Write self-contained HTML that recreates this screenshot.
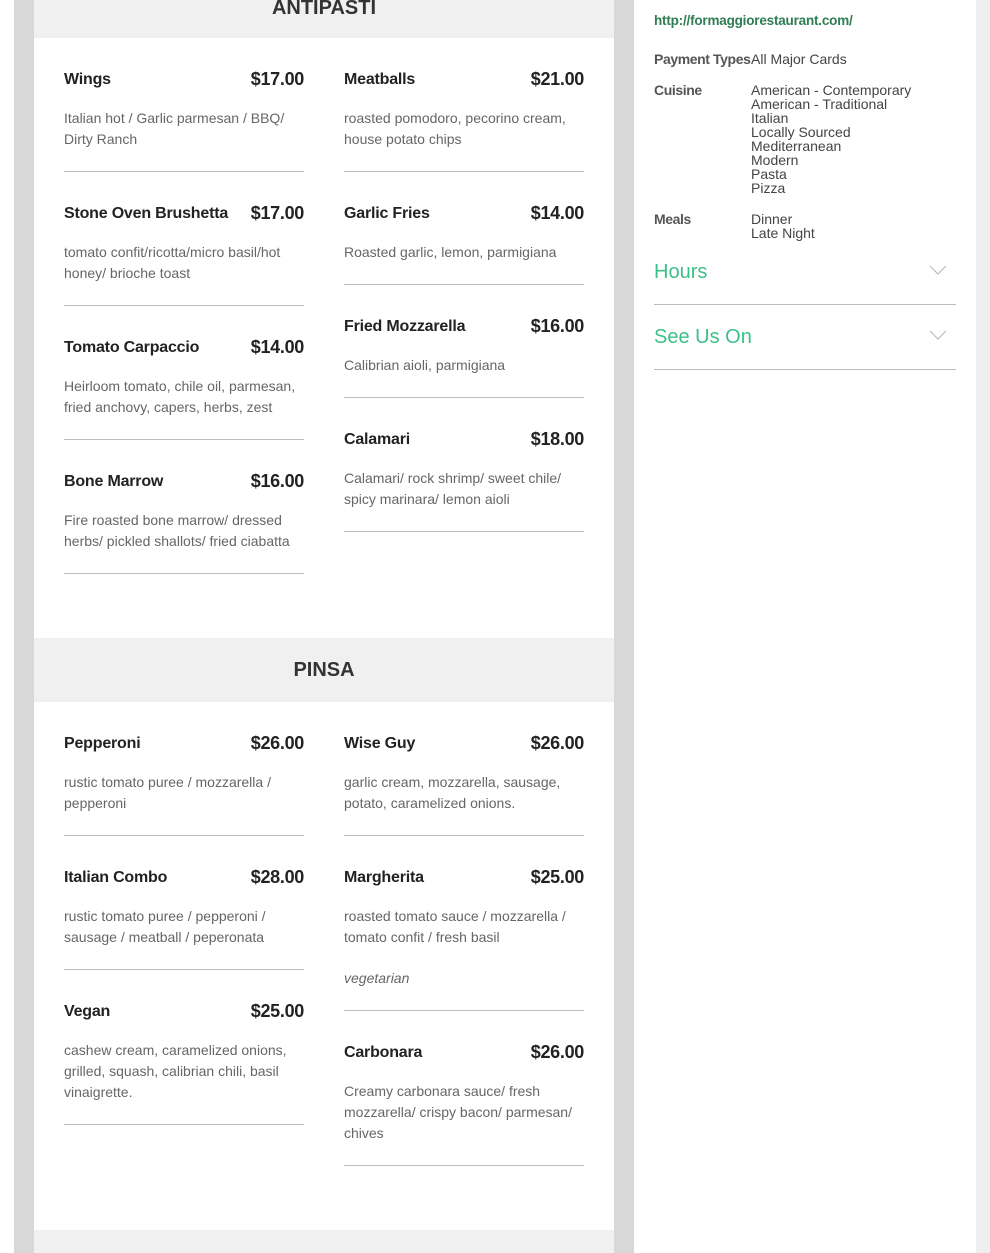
<!DOCTYPE html>
<html style="width:990px;height:1253px;overflow:hidden"><head><meta charset="utf-8"><style>
*{margin:0;padding:0;box-sizing:border-box}
body{width:990px;height:1253px;overflow:hidden;background:#fff;font-family:"Liberation Sans",Arial,sans-serif;position:relative}
.bgl{position:absolute;left:14px;top:0;width:962px;height:1253px;background:#d8d8d8}
.bgr{position:absolute;left:976px;top:0;width:14px;height:1253px;background:#efefef}
.main{position:absolute;left:34px;top:0;width:580px;height:1253px;background:#fff;overflow:hidden}
.side{position:absolute;left:634px;top:0;width:342px;height:1253px;background:#fff}
.band{position:absolute;left:0;width:580px;background:#f0f0f0;text-align:center;font-size:20px;font-weight:bold;color:#333}
.col{position:absolute;width:240px}
.it{border-bottom:1px solid #bdbdbd;margin-bottom:31px}
.t{display:flex;justify-content:space-between;height:20px;line-height:21px;font-size:16px;font-weight:bold;color:#222;letter-spacing:-.2px;white-space:nowrap}
.t b{font-size:18px;letter-spacing:-.3px}
.d{margin-top:19px;font-size:14px;line-height:21px;color:#666;padding-bottom:21px}
.g{font-size:14px;font-style:italic;color:#666;line-height:21px;margin-top:-1px;padding-bottom:21px}
.url{position:absolute;left:20px;top:13px;font-size:13.5px;font-weight:bold;color:#2f7d52;letter-spacing:-.2px}
.row{position:absolute;left:20px;font-size:14px;color:#444;line-height:14px}
.row .k{position:absolute;left:0;font-weight:bold;color:#555;white-space:nowrap;letter-spacing:-.4px}
.row .v{position:absolute;left:97px;white-space:nowrap}
.acc{position:absolute;left:20px;width:302px;height:65px;border-bottom:1px solid #bdbdbd;font-size:20px;color:#3dbf8a}
.acc svg{position:absolute;right:9px;top:25px}
</style></head><body>
<div class="bgl"></div><div class="bgr"></div>
<div class="main">
<div class="band" style="top:-20px;height:58px;line-height:56px">ANTIPASTI</div>
<div class="col" style="left:30px;top:69px">
<div class="it"><div class="t"><span>Wings</span><b>$17.00</b></div><div class="d">Italian hot / Garlic parmesan / BBQ/ Dirty Ranch</div></div>
<div class="it"><div class="t"><span>Stone Oven Brushetta</span><b>$17.00</b></div><div class="d">tomato confit/ricotta/micro basil/hot honey/ brioche toast</div></div>
<div class="it"><div class="t"><span>Tomato Carpaccio</span><b>$14.00</b></div><div class="d">Heirloom tomato, chile oil, parmesan, fried anchovy, capers, herbs, zest</div></div>
<div class="it"><div class="t"><span>Bone Marrow</span><b>$16.00</b></div><div class="d">Fire roasted bone marrow/ dressed herbs/ pickled shallots/ fried ciabatta</div></div>
</div>
<div class="col" style="left:310px;top:69px">
<div class="it"><div class="t"><span>Meatballs</span><b>$21.00</b></div><div class="d">roasted pomodoro, pecorino cream, house potato chips</div></div>
<div class="it"><div class="t"><span>Garlic Fries</span><b>$14.00</b></div><div class="d">Roasted garlic, lemon, parmigiana</div></div>
<div class="it"><div class="t"><span>Fried Mozzarella</span><b>$16.00</b></div><div class="d">Calibrian aioli, parmigiana</div></div>
<div class="it"><div class="t"><span>Calamari</span><b>$18.00</b></div><div class="d">Calamari/ rock shrimp/ sweet chile/ spicy marinara/ lemon aioli</div></div>
</div>
<div class="band" style="top:638px;height:64px;line-height:64px">PINSA</div>
<div class="col" style="left:30px;top:733px">
<div class="it"><div class="t"><span>Pepperoni</span><b>$26.00</b></div><div class="d">rustic tomato puree / mozzarella / pepperoni</div></div>
<div class="it"><div class="t"><span>Italian Combo</span><b>$28.00</b></div><div class="d">rustic tomato puree / pepperoni / sausage / meatball / peperonata</div></div>
<div class="it"><div class="t"><span>Vegan</span><b>$25.00</b></div><div class="d">cashew cream, caramelized onions, grilled, squash, calibrian chili, basil vinaigrette.</div></div>
</div>
<div class="col" style="left:310px;top:733px">
<div class="it"><div class="t"><span>Wise Guy</span><b>$26.00</b></div><div class="d">garlic cream, mozzarella, sausage, potato, caramelized onions.</div></div>
<div class="it"><div class="t"><span>Margherita</span><b>$25.00</b></div><div class="d">roasted tomato sauce / mozzarella / tomato confit / fresh basil</div><div class="g">vegetarian</div></div>
<div class="it"><div class="t"><span>Carbonara</span><b>$26.00</b></div><div class="d">Creamy carbonara sauce/ fresh mozzarella/ crispy bacon/ parmesan/ chives</div></div>
</div>
<div class="band" style="top:1230px;height:23px"></div>
</div>
<div class="side">
<div class="url">http://formaggiorestaurant.com/</div>
<div class="row" style="top:52px"><span class="k">Payment Types</span><span class="v">All Major Cards</span></div>
<div class="row" style="top:83px"><span class="k">Cuisine</span><span class="v">American - Contemporary<br>American - Traditional<br>Italian<br>Locally Sourced<br>Mediterranean<br>Modern<br>Pasta<br>Pizza</span></div>
<div class="row" style="top:212px"><span class="k">Meals</span><span class="v">Dinner<br>Late Night</span></div>
<div class="acc" style="top:240px;line-height:64px">Hours<svg width="18" height="10" viewBox="0 0 18 10"><path d="M1 1L9 9L17 1" fill="none" stroke="#bbb" stroke-width="1.2"/></svg></div>
<div class="acc" style="top:305px;line-height:64px">See Us On<svg width="18" height="10" viewBox="0 0 18 10"><path d="M1 1L9 9L17 1" fill="none" stroke="#bbb" stroke-width="1.2"/></svg></div>
</div>
</body></html>
